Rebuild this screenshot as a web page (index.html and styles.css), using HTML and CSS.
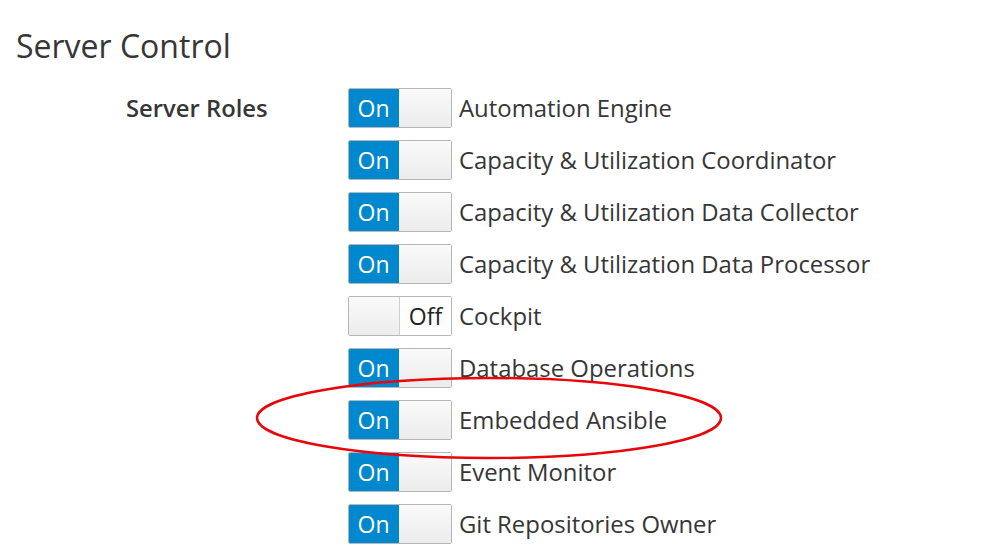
FILE: index.html
```html
<!DOCTYPE html>
<html>
<head>
<meta charset="utf-8">
<link rel="stylesheet" href="styles.css">
</head>
<body>
<div class="page">
  <h1 class="title">Server Control</h1>
  <div class="form-row">
    <div class="label">Server Roles</div>
    <div class="roles">
      <div class="role"><span class="switch on"><span class="state">On</span><span class="handle"></span></span><span class="name">Automation Engine</span></div>
      <div class="role"><span class="switch on"><span class="state">On</span><span class="handle"></span></span><span class="name">Capacity &amp; Utilization Coordinator</span></div>
      <div class="role"><span class="switch on"><span class="state">On</span><span class="handle"></span></span><span class="name">Capacity &amp; Utilization Data Collector</span></div>
      <div class="role"><span class="switch on"><span class="state">On</span><span class="handle"></span></span><span class="name">Capacity &amp; Utilization Data Processor</span></div>
      <div class="role"><span class="switch off"><span class="handle"></span><span class="state">Off</span></span><span class="name">Cockpit</span></div>
      <div class="role"><span class="switch on"><span class="state">On</span><span class="handle"></span></span><span class="name">Database Operations</span></div>
      <div class="role"><span class="switch on"><span class="state">On</span><span class="handle"></span></span><span class="name">Embedded Ansible</span></div>
      <div class="role"><span class="switch on"><span class="state">On</span><span class="handle"></span></span><span class="name">Event Monitor</span></div>
      <div class="role"><span class="switch on"><span class="state">On</span><span class="handle"></span></span><span class="name">Git Repositories Owner</span></div>
    </div>
  </div>
  <svg class="circle" width="470" height="86" viewBox="0 0 470 86"><ellipse cx="235" cy="43" rx="232" ry="40" fill="none" stroke="#e8060a" stroke-width="2.5"/></svg>
</div>
</body>
</html>
```
FILE: styles.css
```css
html, body { margin: 0; padding: 0; background: #fff; }
.page {
  position: relative;
  width: 998px;
  height: 549px;
  overflow: hidden;
  font-family: "Open Sans", sans-serif;
  color: #363636;
}
.title {
  margin: 0;
  padding: 25px 0 0 16px;
  font-size: 32px;
  font-weight: 400;
  line-height: 42px;
  color: #363636;
}
.form-row {
  display: flex;
  margin-top: 21px;
}
.label {
  width: 142px;
  margin-left: 126px;
  margin-right: 80px;
  font-size: 23.8px;
  font-weight: 600;
  line-height: 40px;
}
.roles {
  display: flex;
  flex-direction: column;
  gap: 12px;
}
.role {
  display: flex;
  align-items: center;
  height: 40px;
}
.switch {
  display: flex;
  width: 102px;
  height: 38px;
  border: 1px solid #b7b7b7;
  border-radius: 2px;
  overflow: hidden;
  box-sizing: content-box;
  flex: none;
}
.switch .state {
  width: 51px;
  display: flex;
  align-items: center;
  justify-content: center;
  font-size: 23px;
  line-height: 1;
}
.switch.on .state {
  background: #0088ce;
  color: #fff;
  margin: -1px 0 -1px -1px;
  padding-top: 1px;
  height: 40px;
  box-sizing: border-box;
}
.switch.off .state {
  color: #222;
  background: #fff;
  border-left: 1px solid #cfcfcf;
}
.switch .handle {
  flex: 1;
  background: linear-gradient(#fafafa, #ececec);
}
.name {
  margin-left: 7px;
  font-size: 23.9px;
  line-height: 40px;
  color: #363636;
  white-space: nowrap;
}
.circle {
  position: absolute;
  left: 254px;
  top: 375px;
}
```
